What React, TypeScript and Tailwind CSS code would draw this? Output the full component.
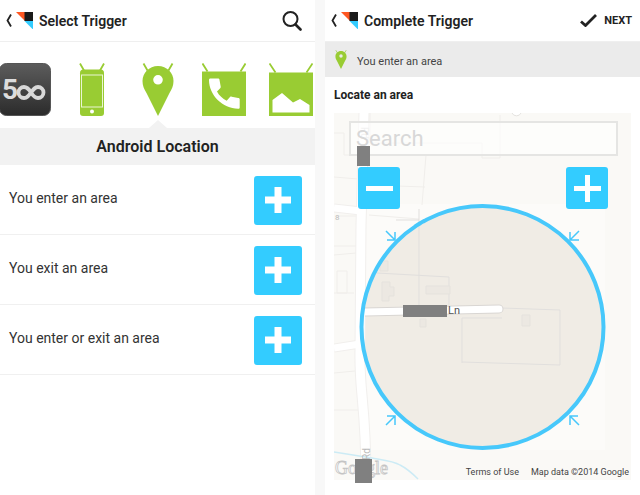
import type { ReactNode } from "react"

const triggers = [
  "You enter an area",
  "You exit an area",
  "You enter or exit an area"
]

const channels = [
  { name: "500px", icon: <FiveHundredIcon /> },
  { name: "Android Device", icon: <DeviceIcon /> },
  { name: "Android Location", icon: <PinIcon className="w-8 h-[53px]" /> },
  { name: "Android Phone Call", icon: <CallIcon /> },
  { name: "Android Photos", icon: <PhotosIcon /> }
]

function FiveHundredIcon() {
  return (
    <svg viewBox="0 0 52 53" className="w-[52px] h-[53px]">
      <defs>
        <linearGradient id="tile" x1="0" y1="0" x2="0" y2="1">
          <stop offset="0" stopColor="#5c5c5c" />
          <stop offset="0.5" stopColor="#444444" />
          <stop offset="1" stopColor="#2b2b2b" />
        </linearGradient>
      </defs>
      <rect x="0.5" y="0.5" width="51" height="52" rx="7" fill="url(#tile)" stroke="#555" />
      <text x="3" y="36" fontSize="28" fontWeight="700" fill="#dcdcdc" className="font-['Roboto',sans-serif]">5</text>
      <path
        d="M32 29.500c-2.500-4-4.500-5.500-7-5.500a5.500 5.500 0 0 0 0 11c3 0 4.500-2 7-5.500s4-5.500 7-5.500a5.500 5.500 0 0 1 0 11c-2.500 0-4.500-1.500-7-5.500z"
        fill="none"
        stroke="#d8d8d8"
        strokeWidth="3.800"
      />
    </svg>
  )
}

function DeviceIcon() {
  return (
    <svg viewBox="0 0 26 53" className="w-[26px] h-[53px]">
      <path d="M1 0.500l4 7M25 0.500l-4 7" stroke="#99cc33" strokeWidth="1.800" />
      <path d="M5 6.500h16c3 0 4 1 4 4V50c0 2-1 3-3 3H4c-2 0-3-1-3-3V10.500c0-3 1-4 4-4z" fill="#99cc33" />
      <rect x="2.500" y="12" width="21" height="32" fill="none" stroke="#eaf5d3" />
      <circle cx="13" cy="48.500" r="2" fill="#fff" />
    </svg>
  )
}

function PinIcon({ className }: { className: string }) {
  return (
    <svg viewBox="0 0 32 53" className={className}>
      <path d="M1.500 0.500l4 7M30.500 0.500l-4 7" stroke="#99cc33" strokeWidth="1.800" />
      <path
        d="M16 3C7 3 0.500 10 0.500 18c0 4.500 1.500 8 4 12L16 53l11.500-23c2.500-4 4-7.500 4-12C31.500 10 25 3 16 3zm0 9a4.800 4.800 0 1 1 0 9.600 4.800 4.800 0 0 1 0-9.600z"
        fill="#99cc33"
        fillRule="evenodd"
      />
    </svg>
  )
}

function CallIcon() {
  return (
    <svg viewBox="0 0 44 53" className="w-11 h-[53px]">
      <path d="M0.500 0.500l5 8M43.500 0.500l-5 8" stroke="#99cc33" strokeWidth="1.800" />
      <path d="M0 8.500h44V53H0z" fill="#99cc33" />
      <path
        d="M7 17c0-1 .5-1.500 1.500-1.500H16c1 0 1.500.5 1.500 1.500l1.200 6.500c.1.700 0 1.200-.5 1.700L15 28.500c2.200 4.200 5.500 7 9.700 9.200l3.300-3.600c.5-.5 1-.6 1.700-.4l6.500 1.300c1 0 1.500.5 1.500 1.500v7.700c0 1-.5 1.500-1.500 1.500C20.500 45.700 7 32 7 17z"
        fill="#fff"
      />
    </svg>
  )
}

function PhotosIcon() {
  return (
    <svg viewBox="0 0 44 53" className="w-11 h-[53px]">
      <path d="M0.500 0.500l6 9M43.500 0.500l-6 9" stroke="#99cc33" strokeWidth="1.800" />
      <path d="M0 9.500h44V53H0z" fill="#99cc33" />
      <path d="M3.500 49.500V37l9.500-7 11 9.500 7-3.500 9.500 6v7.500z" fill="#fff" />
    </svg>
  )
}

function Header({ title, children }: { title: string; children: ReactNode }) {
  return (
    <header className="flex items-center justify-between h-[42px] pl-1.5 pr-2 border-b border-[#efefef]">
      <div className="flex items-center gap-1.5">
        <button aria-label="Back" className="flex items-center gap-1">
          <svg viewBox="0 0 6 13" className="w-1.5 h-[13px]">
            <path d="M5 0.500L1.500 6.500 5 12.500" fill="none" stroke="#222" strokeWidth="1.800" />
          </svg>
          <svg viewBox="0 0 17 17" className="w-[17px] h-[17px]">
            <path d="M0 0h9v9z" fill="#ff5722" />
            <path d="M8.500 0H17v9H8.500z" fill="#1a1a1a" />
            <path d="M8.500 9H17v8.500z" fill="#33ccff" />
          </svg>
        </button>
        <h1 className="text-[14px] leading-5 font-semibold text-[#222]">{title}</h1>
      </div>
      {children}
    </header>
  )
}

function PlusIcon({ className }: { className: string }) {
  return (
    <svg viewBox="0 0 26 26" className={className}>
      <path d="M9.500 0h7v9.500H26v7h-9.500V26h-7v-9.500H0v-7h9.500z" fill="#fff" />
    </svg>
  )
}

function SelectTrigger() {
  return (
    <section className="flex-1 min-w-0 bg-white overflow-hidden">
      <Header title="Select Trigger">
        <button aria-label="Search" className="pr-[5px]">
          <svg viewBox="0 0 20 20" className="w-5 h-5">
            <circle cx="8.500" cy="8" r="7" fill="none" stroke="#222" strokeWidth="2" />
            <path d="M13.500 13.500l5 5" stroke="#222" strokeWidth="2.600" strokeLinecap="round" />
          </svg>
        </button>
      </Header>

      {/* Channel strip, runs past both edges */}
      <nav className="grid grid-cols-5 -ml-2 -mr-[9px] pt-[21px]">
        {channels.map((channel) => (
          <button key={channel.name} aria-label={channel.name} className="flex justify-center">
            {channel.icon}
          </button>
        ))}
      </nav>
      <svg viewBox="0 0 18 8" className="w-[18px] h-2 mx-auto mt-1">
        <path d="M9 0l9 8H0z" fill="#f2f2f2" />
      </svg>

      <h2 className="bg-[#f2f2f2] text-center text-[16px] leading-[37px] font-semibold text-[#222]">
        Android Location
      </h2>

      <ul>
        {triggers.map((trigger) => (
          <li key={trigger} className="flex items-center justify-between h-[70px] pl-[9px] pr-[13px] pt-px border-b border-[#f0f0f0]">
            <span className="pb-1 text-[14px] leading-5 text-[#333]">{trigger}</span>
            <button aria-label={`Add: ${trigger}`} className="flex items-center justify-center w-12 h-[49px] rounded-[3px] bg-[#33ccff]">
              <PlusIcon className="w-[26px] h-[26px]" />
            </button>
          </li>
        ))}
      </ul>
    </section>
  )
}

function AreaMap() {
  return (
    <svg viewBox="0 0 297 367" className="block w-full h-auto font-['Roboto',sans-serif]">
      <rect width="297" height="367" fill="#faf9f6" />
      <rect x="27" y="91" width="244" height="246" fill="#fcfbf9" />

      {/* Faint parcels */}
      <g fill="none" stroke="#f0eeeb">
        <path d="M0 20h10v22h12M0 64l24 2M0 142l22-2M0 180h20M0 260l21-2M0 297h24" />
        <path d="M92 42l-4 50M35 72l56 2M36 0v30h112v15h18V2M35 102l50 4" />
        <path d="M3 103h20v30H0M3 158h10v22H3z" />
      </g>
      <path d="M178 0a5 5 0 0 0 9 0" fill="#fff" stroke="#e5e3e0" />

      <circle cx="148.500" cy="214" r="121" fill="#f0ece5" />

      {/* Parcels and houses inside the area */}
      <g fill="none" stroke="#e1dfdd">
        <path d="M85 96v96M62 107h23M43 160l72 4v28" />
        <path d="M128 250v-45h40M168 195l58 2v55l-98-3" />
      </g>
      <g fill="#ece8e2" stroke="#e5e2dd">
        <path d="M48 169h8v5h4v9h-5v5h-7zM92 173h24v8H92zM46 148h8v10h-8zM86 206h6v8h-6zM188 202h8v11h-8z" />
      </g>

      {/* Roads */}
      <g fill="none" strokeLinejoin="round">
        <path d="M30 0L27 112 26 237C25 280 32 290 32 367" stroke="#f1efed" strokeWidth="11" />
        <path d="M0 95l27 3M0 235l26-4" stroke="#f1efed" strokeWidth="9" />
        <path d="M31 199l134-3" stroke="#d9d6d3" strokeWidth="9" strokeLinecap="round" />
        <path d="M30 0L27 112 26 237C25 280 32 290 32 367" stroke="#fff" strokeWidth="9" />
        <path d="M0 95l27 3M0 235l26-4" stroke="#fff" strokeWidth="7" />
        <path d="M31 199l134-3" stroke="#fff" strokeWidth="7" strokeLinecap="round" />
      </g>
      <path d="M0 339l38 6c12 2 22 3 28 7 8 4 13 9 18 14" fill="none" stroke="#ccebf5" strokeWidth="1.500" />

      <g fontSize="10" fill="#bbb">
        <text x="1" y="107" fontSize="8">8</text>
        <text transform="translate(36 347) rotate(-90)">Rd</text>
        <text transform="translate(27 14) rotate(90)" fill="#ddd">Rd</text>
        <text x="114" y="201" fontSize="11" fill="#555">Ln</text>
      </g>
      <text x="1" y="361" fontSize="18" fill="#fff" stroke="#c4c4c4" strokeWidth="0.800" className="font-['Liberation_Serif',serif]">
        Google
      </text>

      <circle cx="148.500" cy="214" r="121" fill="none" stroke="#47c8fb" strokeWidth="4" />
      <g fill="none" stroke="#47c8fb" strokeWidth="1.500">
        <path d="M52 118l9 9M53 127h8v-8" />
        <path d="M245 118l-9 9M236 119v8h9" />
        <path d="M52 312l9-9M53 303h8v9" />
        <path d="M245 312l-9-9M244 303h-8v9" />
      </g>
    </svg>
  )
}

// Blocks that hide the street names, above the map and the search box
function StreetMasks() {
  return (
    <svg viewBox="0 0 297 367" className="absolute top-0 left-0 w-full h-auto overflow-visible pointer-events-none">
      <path d="M23 33h13v20H23zM69 192h44v12H69zM21 346h17v24H21z" fill="#808080" />
    </svg>
  )
}

function CompleteTrigger() {
  return (
    <section className="flex-1 min-w-0 bg-white">
      <Header title="Complete Trigger">
        <button className="flex items-center gap-[7px] text-[11px] leading-4 font-bold text-[#222]">
          <svg viewBox="0 0 17 13" className="w-[17px] h-[13px]">
            <path d="M1 7.500l4.500 4L16 1" fill="none" stroke="#222" strokeWidth="2.800" />
          </svg>
          NEXT
        </button>
      </Header>

      <div className="flex items-center gap-2.5 h-[35px] pl-2.5 bg-[#ebebeb] text-[11px] leading-4 text-[#444]">
        <PinIcon className="w-3 h-[19px]" />
        <span className="pt-1">You enter an area</span>
      </div>

      <div className="px-[9px]">
        <label htmlFor="place" className="block text-[12px] leading-9 font-bold text-[#222]">
          Locate an area
        </label>
        <div className="relative">
          <AreaMap />
          <div className="absolute inset-x-0 top-2 pl-[15px] pr-[13px]">
            <input
              id="place"
              type="search"
              placeholder="Search"
              className="block w-full h-[35px] px-[5px] border-2 border-[#e5e5e3] bg-white/60 text-[22px] leading-7 placeholder:text-[#d8d8d8]"
            />
            <div className="flex justify-between pt-[11px] pl-[9px] pr-2.5">
              <button aria-label="Smaller area" className="flex items-center justify-center w-[42px] h-[42px] rounded-[3px] bg-[#33ccff]">
                <svg viewBox="0 0 27 5" className="w-[27px] h-[5px]">
                  <path d="M0 0h27v5H0z" fill="#fff" />
                </svg>
              </button>
              <button aria-label="Larger area" className="flex items-center justify-center w-[42px] h-[42px] rounded-[3px] bg-[#33ccff]">
                <svg viewBox="0 0 27 27" className="w-[27px] h-[27px]">
                  <path d="M11 0h5v11h11v5H16v11h-5V16H0v-5h11z" fill="#fff" />
                </svg>
              </button>
            </div>
          </div>
          <StreetMasks />
          <div className="absolute bottom-0 right-0.5 flex gap-3 text-[9px] leading-4 text-[#444]">
            <a href="#terms">Terms of Use</a>
            <span>Map data ©2014 Google</span>
          </div>
        </div>
      </div>
    </section>
  )
}

export default function App() {
  return (
    <main className="flex gap-2.5 min-h-screen bg-[#f8f8f8] font-['Roboto',sans-serif]">
      <SelectTrigger />
      <CompleteTrigger />
    </main>
  )
}
